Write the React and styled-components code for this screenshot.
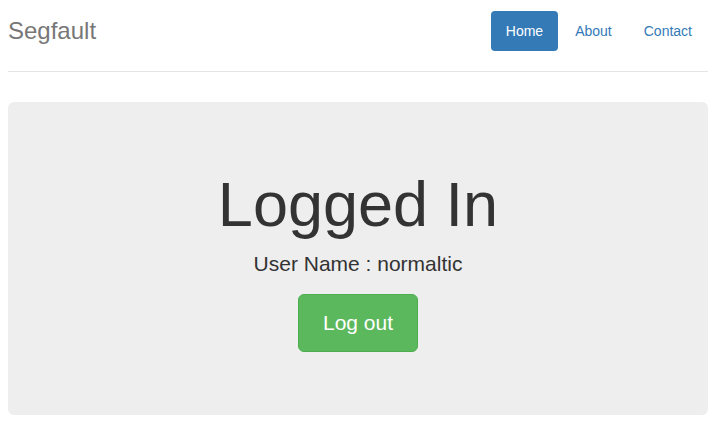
import React from "react"
import styled, { createGlobalStyle } from "styled-components"

const GlobalStyle = createGlobalStyle`
  * {
    box-sizing: border-box;
  }
  body {
    margin: 8px;
    background: #fff;
    font-family: "Liberation Sans", Arial, sans-serif;
    font-size: 14px;
    line-height: 1.42857;
    color: #333;
  }
`

const Page = styled.div`
  padding-top: 3px;
  margin-right: 3px;
`

const Header = styled.header`
  display: flex;
  justify-content: space-between;
  align-items: flex-start;
  padding-bottom: 20px;
  padding-right: 1px;
  border-bottom: 1px solid #e5e5e5;
`

const Brand = styled.h3`
  margin: 0;
  font-size: 24px;
  font-weight: 500;
  line-height: 40px;
  color: #777;
`

const Nav = styled.ul`
  display: flex;
  gap: 2px;
  list-style: none;
  margin: 0;
  padding: 0;
`

const NavLink = styled.a`
  display: block;
  padding: 10px 15px;
  line-height: 20px;
  border-radius: 4px;
  text-decoration: none;
  color: ${(p) => (p.$active ? "#fff" : "#337ab7")};
  background: ${(p) => (p.$active ? "#337ab7" : "transparent")};
`

const Jumbotron = styled.section`
  margin-top: 30px;
  padding: 48px 0;
  border-radius: 6px;
  background: #eee;
  text-align: center;
`

const Title = styled.h1`
  margin: 20px 0 10px;
  font-size: 63px;
  font-weight: 500;
  line-height: 1.1;
  color: #333;
`

const Lead = styled.p`
  margin: 0 0 15px;
  font-size: 21px;
  line-height: 1.42857;
`

const LogoutButton = styled.a`
  display: inline-block;
  padding: 14px 24px;
  font-size: 21px;
  line-height: 1.33333;
  color: #fff;
  background: #5cb85c;
  border: 1px solid #4cae4c;
  border-radius: 6px;
  text-decoration: none;
  vertical-align: middle;
`

const links = [
  { label: "Home", active: true },
  { label: "About" },
  { label: "Contact" },
]

export default function App() {
  return (
    <Page>
      <GlobalStyle />
      <Header>
        <Brand>Segfault</Brand>
        <Nav>
          {links.map((l) => (
            <li key={l.label}>
              <NavLink href="#" $active={l.active}>
                {l.label}
              </NavLink>
            </li>
          ))}
        </Nav>
      </Header>
      <Jumbotron>
        <Title>Logged In</Title>
        <Lead>User Name : normaltic</Lead>
        <Lead>
          <LogoutButton href="#">Log out</LogoutButton>
        </Lead>
      </Jumbotron>
    </Page>
  )
}
